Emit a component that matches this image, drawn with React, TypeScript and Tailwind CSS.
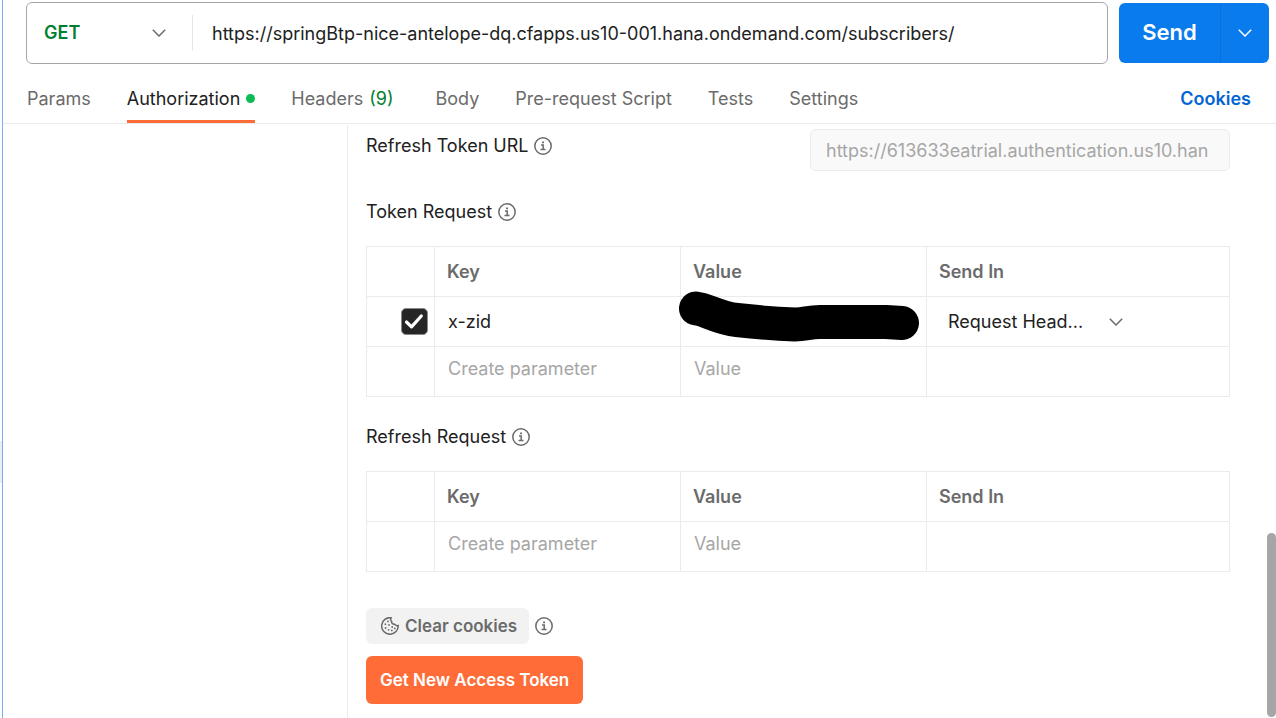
import type { ReactNode } from 'react';

function Chevron({ className }: { className: string }) {
  return (
    <svg viewBox="0 0 14 8" fill="none" stroke="currentColor" strokeWidth="1.5" aria-hidden="true" className={`h-2 w-3.5 shrink-0 ${className}`}>
      <path d="M.8.8 7 7 13.2.8" />
    </svg>
  );
}

function InfoIcon() {
  return (
    <svg viewBox="0 0 18 18" fill="none" stroke="currentColor" aria-hidden="true" className="size-[18px] shrink-0 text-[#6b6b6b]">
      <circle cx="9" cy="9" r="8.2" strokeWidth="1.5" />
      <path d="M7 8H9.2V12.5M6.5 12.5H11.5" strokeWidth="1.5" />
      <path d="M8.1 5.3H10" strokeWidth="1.8" />
    </svg>
  );
}

function CookieIcon() {
  return (
    <svg viewBox="0 0 18 18" fill="none" stroke="currentColor" strokeWidth="1.5" strokeLinejoin="round" aria-hidden="true" className="size-[18px] shrink-0">
      <path d="M10.3.8A8.3 8.3 0 1 0 17.2 8.3C15.9 9 14.4 8.6 13.8 7.2 12 7.6 10.3 6.3 10.7 4.4 9.4 3.6 9.3 1.8 10.3.8Z" />
      <g fill="currentColor" stroke="none">
        <circle cx="7" cy="4.4" r=".9" />
        <circle cx="4.4" cy="7.2" r=".9" />
        <circle cx="8" cy="8" r=".9" />
        <circle cx="4.6" cy="11" r=".9" />
        <circle cx="7.6" cy="12.8" r=".9" />
        <circle cx="11.2" cy="10" r=".9" />
        <circle cx="10.8" cy="13.4" r=".9" />
        <circle cx="13.8" cy="11.4" r=".9" />
      </g>
    </svg>
  );
}

function Label({ children }: { children: ReactNode }) {
  return (
    <h2 className="flex h-6 items-center gap-1.5">
      {children}
      <InfoIcon />
    </h2>
  );
}

const cell = 'border-r border-b border-[#ebebeb] p-0 text-left';

function ParamTable({ label, children }: { label: string; children: ReactNode }) {
  return (
    <table aria-label={label} className="w-full table-fixed border-separate border-spacing-0 border-t border-l border-[#ebebeb]">
      <colgroup>
        <col className="w-[68px]" />
        <col className="w-[246px]" />
        <col className="w-[246px]" />
        <col />
      </colgroup>
      <thead className="text-[#6b6b6b]">
        <tr className="h-[50px]">
          <td className={cell} />
          <th className={`${cell} pl-3 font-semibold`}>Key</th>
          <th className={`${cell} pl-3 font-semibold`}>Value</th>
          <th className={`${cell} pl-3 font-semibold`}>Send In</th>
        </tr>
      </thead>
      <tbody>{children}</tbody>
    </table>
  );
}

const field = 'block h-6 w-full bg-transparent pl-[13px] placeholder:text-[#a6a6a6] outline-none';

function EmptyRow() {
  return (
    <tr className="h-[50px]">
      <td className={cell} />
      <td className={`${cell} pb-1.5`}>
        <input aria-label="New key" placeholder="Create parameter" className={field} />
      </td>
      <td className={`${cell} pb-1.5`}>
        <input aria-label="New value" placeholder="Value" className={field} />
      </td>
      <td className={cell} />
    </tr>
  );
}

const tab = 'flex h-full items-center border-b-[3px] border-transparent pt-[3px]';

export default function App() {
  return (
    <div className="flex h-screen overflow-hidden bg-white font-['Inter',sans-serif] text-[18px] leading-6 text-[#212121]">
      <div className="flex w-[3px] shrink-0 flex-col border-r border-[#74aef6] pt-[441px]">
        <div className="h-[42px] bg-[#ededed]" />
      </div>
      <div className="relative flex min-w-0 flex-1 flex-col">
        <div className="flex items-center gap-[11px] pt-0.5 pr-[7px] pl-[23px]">
          <div className="flex h-[62px] min-w-0 flex-1 items-center rounded-md border border-[#a6a6a6]">
            <div className="relative flex h-9 w-[166px] shrink-0 items-center border-r border-[#e6e6e6]">
              <select aria-label="HTTP method" className="h-full w-full appearance-none bg-transparent pl-[17px] font-semibold text-[#007f31]">
                <option>GET</option>
                <option>POST</option>
              </select>
              <Chevron className="pointer-events-none absolute right-[26px] text-[#6b6b6b]" />
            </div>
            <input
              aria-label="Request URL"
              defaultValue="https://springBtp-nice-antelope-dq.cfapps.us10-001.hana.ondemand.com/subscribers/"
              className="h-full min-w-0 flex-1 bg-transparent px-[19px] outline-none"
            />
          </div>
          <div className="flex h-[60px] w-[150px] overflow-hidden rounded-md bg-[#097bed] text-white">
            <button className="flex-1 border-r border-[#0a6fd6] pb-0.5 text-[22px] font-semibold">Send</button>
            <button aria-label="More send options" className="flex w-12 items-center justify-center">
              <Chevron className="" />
            </button>
          </div>
        </div>

        <nav className="flex h-[60px] shrink-0 items-center border-b border-[#ebebeb] pr-[25px] pl-6 text-[#6b6b6b]">
          <div className="flex h-full flex-1 items-center gap-9 pt-2.5">
            <button className={tab}>Params</button>
            <button className="flex h-full items-center gap-1.5 border-b-[3px] border-[#ff6c37] pt-[3px] text-[#212121]">
              Authorization
              <span className="size-[9px] rounded-full bg-[#0cbb52]" />
            </button>
            <button className={tab}>
              Headers <span className="ml-1.5 text-[#007f31]">(9)</span>
            </button>
            <button className={`${tab} ml-1.5`}>Body</button>
            <button className={tab}>Pre-request Script</button>
            <button className={tab}>Tests</button>
            <button className={tab}>Settings</button>
          </div>
          <a href="#cookies" className="pt-2.5 font-semibold text-[#0265d2]">Cookies</a>
        </nav>

        <div className="flex min-h-0 flex-1 pt-px">
          <aside className="w-[344px] shrink-0" />
          <main className="min-w-0 flex-1 border-l border-[#ebebeb] pt-1 pr-[46px] pl-[18px]">
            <div className="flex justify-between">
              <label htmlFor="refresh-url" className="mt-[5px] flex h-6 items-center gap-1.5">
                Refresh Token URL
                <InfoIcon />
              </label>
              <input
                id="refresh-url"
                placeholder="https://613633eatrial.authentication.us10.han"
                className="h-[42px] w-[420px] rounded-md border border-[#ebebeb] bg-[#f9f9f9] px-[15px] outline-none placeholder:text-[#a6a6a6]"
              />
            </div>

            <section className="mt-[29px] flex flex-col gap-[22px]">
              <Label>Token Request</Label>
              <ParamTable label="Token Request">
                <tr className="h-[50px]">
                  <td className={cell}>
                    <label className="ml-[34px] flex size-[27px]">
                      <input type="checkbox" defaultChecked aria-label="Enable x-zid" className="peer sr-only" />
                      <svg viewBox="0 0 27 27" fill="none" aria-hidden="true" className="size-[27px]">
                        <rect x=".5" y=".5" width="26" height="26" rx="4.5" fill="#262626" stroke="#8a8a8a" />
                        <path d="m5.5 14 5 4.8L20.3 8" stroke="#fff" strokeWidth="3.2" strokeLinecap="round" strokeLinejoin="round" />
                      </svg>
                    </label>
                  </td>
                  <td className={cell}>
                    <input aria-label="Key" defaultValue="x-zid" className={field} />
                  </td>
                  <td className={`${cell} relative`}>
                    <svg viewBox="676 288 248 58" fill="none" aria-hidden="true" className="absolute -top-[9px] -left-[5px] h-[58px] w-[248px] max-w-none">
                      <path d="M696 308.5C708 310 718 318 737 320Q768 323.5 795 324.5C806 324.5 808 322 820 322H886L902 323" stroke="#000" strokeWidth="34" strokeLinecap="round" strokeLinejoin="round" />
                    </svg>
                  </td>
                  <td className={cell}>
                    <div className="relative ml-[21px] flex w-[175px] items-center">
                      <select aria-label="Send in" className="h-8 w-full appearance-none bg-transparent">
                        <option>Request Head...</option>
                      </select>
                      <Chevron className="pointer-events-none absolute right-0 text-[#6b6b6b]" />
                    </div>
                  </td>
                </tr>
                <EmptyRow />
              </ParamTable>
            </section>

            <section className="mt-7 flex flex-col gap-[22px]">
              <Label>Refresh Request</Label>
              <ParamTable label="Refresh Request">
                <EmptyRow />
              </ParamTable>
            </section>

            <div className="mt-9 flex items-center gap-1.5">
              <button className="flex h-9 items-center gap-1.5 rounded-md bg-[#f2f2f2] pr-3 pl-[15px] text-[17px] font-semibold text-[#6b6b6b]">
                <CookieIcon />
                Clear cookies
              </button>
              <InfoIcon />
            </div>
            <button className="mt-3 h-12 rounded-md bg-[#ff6c37] px-3.5 text-[17px] font-semibold text-white">Get New Access Token</button>
          </main>
        </div>
        <div className="absolute right-0 bottom-px h-[184px] w-[9px] rounded-full bg-[#a6a6a6]" />
      </div>
    </div>
  );
}
